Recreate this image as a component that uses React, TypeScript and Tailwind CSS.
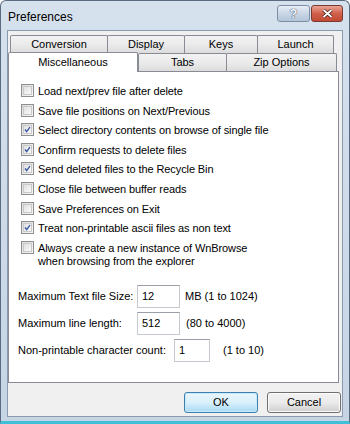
const font = { fontFamily: '"Liberation Sans", Arial, sans-serif' };

interface CheckProps {
  checked?: boolean;
  lines: string[];
}

const CheckRow = ({ checked, lines }: CheckProps) => {
  return (
    <div className="flex items-start">
      <div className="mt-[3px] w-[13px] h-[13px] shrink-0 border border-[#8f8f8f] bg-gradient-to-br from-[#dcdcdc] to-[#f8f8f8] p-[1px]">
        <div className="w-full h-full border border-[#c9c9c9] bg-gradient-to-br from-[#e0e0e0] to-[#fafafa] flex items-center justify-center">
          {checked && (
            <svg width="11" height="11" viewBox="0 0 11 11" className="-m-[1px]">
              <path d="M2.5 5.5 L4.5 8 L8.5 2.5" fill="none" stroke="#3d5aa6" strokeWidth="1.7" />
            </svg>
          )}
        </div>
      </div>
      <div className="ml-[4px] text-[11px] leading-[13px] pt-[4px] text-black tracking-[-0.1px]">
        {lines.map((l) => (
          <div key={l}>{l}</div>
        ))}
      </div>
    </div>
  );
};

const TabItem = ({ label, w, selected }: { label: string; w: string; selected?: boolean }) => {
  return (
    <div
      className={
        selected
          ? `${w} relative z-10 h-[20px] -mb-[1px] bg-white border border-b-0 border-[#898c95] rounded-t-[2px] flex items-center justify-center text-[11px] text-black`
          : `${w} h-[18px] bg-gradient-to-b from-[#f2f2f2] via-[#ebebeb] to-[#dcdcdc] border border-b-0 border-[#898c95] -mr-[1px] rounded-t-[2px] flex items-center justify-center text-[11px] text-black`
      }
    >
      {label}
    </div>
  );
};

const TextBox = ({ value, w }: { value: string; w: string }) => (
  <div className={`${w} h-[23px] bg-white border border-[#c5c9d0] border-t-[#9a9ea6] px-[4px] pt-[2px] text-[11px] text-black`}>
    {value}
  </div>
);

export default function App() {
  const options: CheckProps[] = [
    { lines: ["Load next/prev file after delete"] },
    { lines: ["Save file positions on Next/Previous"] },
    { checked: true, lines: ["Select directory contents on browse of single file"] },
    { checked: true, lines: ["Confirm requests to delete files"] },
    { checked: true, lines: ["Send deleted files to the Recycle Bin"] },
    { lines: ["Close file between buffer reads"] },
    { lines: ["Save Preferences on Exit"] },
    { checked: true, lines: ["Treat non-printable ascii files as non text"] },
    { lines: ["Always create a new instance of WnBrowse", "when browsing from the explorer"] },
  ];

  return (
    <div
      style={font}
      className="w-[350px] h-[424px] bg-gradient-to-b from-[#d6e1ee] to-[#c6d4e4] border border-[#5b6b7f] border-b-[3px] border-b-[#3fbfd8] rounded-t-[6px] flex flex-col px-[6px] pb-[4px] overflow-hidden"
    >
      <div className="h-[29px] flex items-start justify-between">
        <span className="mt-[7px] ml-[1px] text-[12px] text-black">Preferences</span>
        <div className="flex gap-[1px] mt-[4px]">
          <div className="w-[33px] h-[17px] rounded-[3px] border border-[#7e8ea3] bg-gradient-to-b from-[#e8eef6] via-[#c9d6e5] to-[#b4c5da] flex items-center justify-center">
            <span className="text-[13px] font-bold leading-none text-[#f4f7fb] [text-shadow:0_0_1px_#34445a,0_0_1px_#34445a]">?</span>
          </div>
          <div className="w-[32px] h-[17px] rounded-[3px] border border-[#7a3a32] bg-gradient-to-b from-[#e8a493] via-[#d0604c] to-[#c24a34] flex items-center justify-center">
            <svg width="11" height="9" viewBox="0 0 11 9">
              <path d="M1.5 1 L9.5 8 M9.5 1 L1.5 8" stroke="#3a1410" strokeWidth="3.2" />
              <path d="M1.5 1 L9.5 8 M9.5 1 L1.5 8" stroke="#ffffff" strokeWidth="1.8" />
            </svg>
          </div>
        </div>
      </div>

      <div className="flex-1 bg-[#f0f0f0] border border-[#8a9bb0] flex flex-col">
        <div className="pt-[4px] pl-[2px] flex">
          <TabItem label="Conversion" w="w-[98px]" />
          <TabItem label="Display" w="w-[78px]" />
          <TabItem label="Keys" w="w-[74px]" />
          <TabItem label="Launch" w="w-[77px]" />
        </div>
        <div className="flex items-end -mt-[2px] h-[20px]">
          <TabItem label="Miscellaneous" w="w-[130px]" selected />
          <TabItem label="Tabs" w="w-[89px]" />
          <TabItem label="Zip Options" w="w-[111px]" />
        </div>

        <div className="w-[331px] h-[312px] bg-white border border-[#898c95] flex flex-col pt-[9px]">
          <div className="pl-[12px] flex flex-col gap-[2.6px]">
            {options.map((o) => (
              <CheckRow key={o.lines[0]} checked={o.checked} lines={o.lines} />
            ))}
          </div>

          <div className="mt-[17px] pl-[9px] flex flex-col gap-[4px] text-[11px] text-black">
            <div className="flex items-center">
              <span className="w-[119px]">Maximum Text file Size:</span>
              <TextBox value="12" w="w-[43px]" />
              <span className="ml-[5px]">MB (1 to 1024)</span>
            </div>
            <div className="flex items-center">
              <span className="w-[119px]">Maximum line length:</span>
              <TextBox value="512" w="w-[43px]" />
              <span className="ml-[6px]">(80 to 4000)</span>
            </div>
            <div className="flex items-center">
              <span className="w-[156px]">Non-printable character count:</span>
              <TextBox value="1" w="w-[36px]" />
              <span className="ml-[13px]">(1 to 10)</span>
            </div>
          </div>
        </div>

        <div className="mt-[9px] flex justify-end gap-[9px] pr-[1px]">
          <div className="w-[74px] h-[21px] rounded-[3px] border border-[#3c7fb1] bg-gradient-to-b from-[#eaf6fd] via-[#d9f0fc] to-[#a7d9f5] shadow-[inset_0_0_0_1px_#c8eafb] flex items-center justify-center text-[11px] text-black">
            OK
          </div>
          <div className="w-[74px] h-[21px] rounded-[3px] border border-[#707070] bg-gradient-to-b from-[#f2f2f2] via-[#ebebeb] to-[#cfcfcf] shadow-[inset_0_0_0_1px_#fcfcfc] flex items-center justify-center text-[11px] text-black">
            Cancel
          </div>
        </div>
      </div>
    </div>
  );
}
